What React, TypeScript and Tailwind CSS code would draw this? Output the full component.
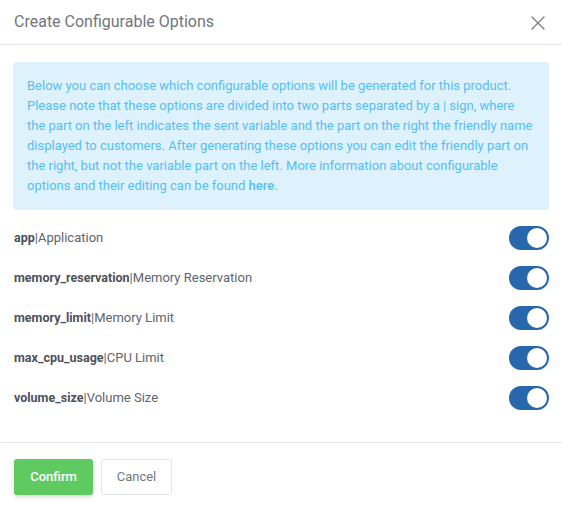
import { X } from 'lucide-react';

const OPTIONS = [
  { key: 'app', label: 'Application' },
  { key: 'memory_reservation', label: 'Memory Reservation' },
  { key: 'memory_limit', label: 'Memory Limit' },
  { key: 'max_cpu_usage', label: 'CPU Limit' },
  { key: 'volume_size', label: 'Volume Size' },
];

function Toggle() {
  return (
    <div className="flex h-6 w-10 items-center justify-end rounded-full bg-[#2867ab] p-[2px]">
      <div className="h-5 w-5 rounded-full bg-white" />
    </div>
  );
}

export default function App() {
  return (
    <div className="h-[509px] w-[562px] bg-white font-['Roboto',sans-serif]">
      <div className="flex h-[45px] items-center justify-between border-b border-[#e7e8ec] pl-[14px] pr-[12px]">
        <h2 className="text-[16px] text-[#71767e]">Create Configurable Options</h2>
        <X size={24} strokeWidth={1.4} className="mt-[2px] text-[#7b8089]" />
      </div>
      <div className="px-[13px] pt-[17px] pb-6">
        <div className="rounded-[3px] bg-[#def2fd] px-[14px] py-[14px] text-[13px] leading-5 text-[#54bff5]">
          Below you can choose which configurable options will be generated for this product. Please note that these
          options are divided into two parts separated by a | sign, where the part on the left indicates the sent
          variable and the part on the right the friendly name displayed to customers. After generating these options
          you can edit the friendly part on the right, but not the variable part on the left. More information about
          configurable options and their editing can be found <span className="font-medium">here</span>.
        </div>
        <div className="mt-2 flex flex-col">
          {OPTIONS.map((o) => (
            <div key={o.key} className="flex h-10 items-center justify-between pl-px">
              <span className="text-[13px] text-[#60646b]">
                <span className="text-[12.5px] font-bold text-[#4d5158]">{o.key}</span>|{o.label}
              </span>
              <Toggle />
            </div>
          ))}
        </div>
      </div>
      <div className="flex gap-2 border-t border-[#e7e8ec] px-[14px] pt-4">
        <button className="h-9 w-[79px] rounded-[3px] bg-[#5fca5f] text-[13px] font-medium text-white shadow-[0_2px_4px_rgba(0,0,0,0.15)]">
          Confirm
        </button>
        <button className="h-9 w-[71px] rounded-[3px] border border-[#e3e4e8] bg-white text-[13px] text-[#737780]">
          Cancel
        </button>
      </div>
    </div>
  );
}
